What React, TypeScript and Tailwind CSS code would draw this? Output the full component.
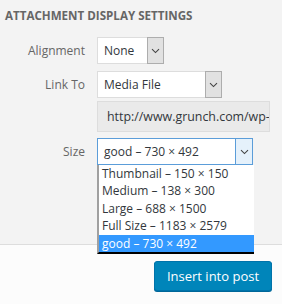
import React from "react";

const Chevron = () => (
  <svg width="9" height="6" viewBox="0 0 9 6" fill="none">
    <path d="M1 1.2 L4.5 4.6 L8 1.2" stroke="#444" strokeWidth="1.1" />
  </svg>
);

const options = [
  "Thumbnail – 150 × 150",
  "Medium – 138 × 300",
  "Large – 688 × 1500",
  "Full Size – 1183 × 2579",
  "good – 730 × 492",
];

export default function App() {
  return (
    <div
      className="w-[282px] h-[304px] bg-[#f3f3f3] flex flex-col overflow-hidden"
      style={{ fontFamily: '"Open Sans", "Noto Sans", sans-serif' }}
    >
      <div className="h-[244px] flex flex-col">
        <div className="pl-[5px] pt-[7px] h-[37px] text-[11.6px] font-bold uppercase text-[#666] leading-[18px] whitespace-nowrap">
          Attachment Display Settings
        </div>
        <div className="flex items-center h-[27px]">
          <div className="w-[85px] text-right text-[12px] text-[#666]">Alignment</div>
          <div className="ml-[12px] w-[67px] h-[27px] flex bg-white border border-[#ddd]">
            <div className="flex-1 pl-[6px] text-[12px] text-[#32373c] leading-[25px]">None</div>
            <div className="w-[17px] bg-[#e1e1e1] border border-[#adadad] flex items-center justify-center -my-px -mr-px h-[27px]">
              <Chevron />
            </div>
          </div>
        </div>
        <div className="flex items-center h-[27px] mt-[7px]">
          <div className="w-[85px] text-right text-[12px] text-[#666]">Link To</div>
          <div className="ml-[12px] w-[125px] h-[27px] flex bg-white border border-[#ddd]">
            <div className="flex-1 pl-[6px] text-[12px] text-[#32373c] leading-[25px]">Media File</div>
            <div className="w-[17px] bg-[#e1e1e1] border border-[#adadad] flex items-center justify-center -my-px -mr-px h-[27px]">
              <Chevron />
            </div>
          </div>
        </div>
        <div className="flex h-[31px] mt-[3px]">
          <div className="ml-[97px] w-[173px] h-[31px] bg-[#eaeaea] border border-[#dddddd] overflow-hidden whitespace-nowrap pl-[9px] text-[12.4px] text-[#32373c] leading-[29px]">
            http://www.grunch.com/wp-content
          </div>
        </div>
        <div className="flex items-center h-[27px] mt-[6px] relative">
          <div className="w-[85px] text-right text-[12px] text-[#666]">Size</div>
          <div className="ml-[12px] w-[156px] h-[27px] flex bg-white border border-[#5b9dd9]">
            <div className="flex-1 pl-[6px] text-[12px] text-[#32373c] leading-[25px] whitespace-nowrap">good – 730 × 492</div>
            <div className="w-[17px] bg-[#e5f1fb] border-l border-[#5b9dd9] flex items-center justify-center">
              <Chevron />
            </div>
          </div>
          <div className="absolute left-[97px] top-[27px] w-[157px] bg-white border-l-2 border-l-[#a0a0a0] border-b-2 border-b-black z-10">
            {options.map((o, i) => (
              <div
                key={o}
                className={`h-[17.4px] pl-[3px] text-[12px] leading-[17px] whitespace-nowrap overflow-hidden ${
                  i === 4 ? "bg-[#3399ff] text-white" : "text-[#32373c]"
                }`}
              >
                {o}
              </div>
            ))}
          </div>
        </div>
      </div>
      <div className="flex-1 bg-[#fcfcfc] border-t border-[#dddddd] flex justify-end items-start pt-[16px] pr-[10px]">
        <button className="h-[30px] w-[118px] rounded-[3px] bg-[#0085ba] border border-[#0073aa] text-white text-[13px] leading-[28px] shadow-[0_1px_0_#006799]">
          Insert into post
        </button>
      </div>
    </div>
  );
}
